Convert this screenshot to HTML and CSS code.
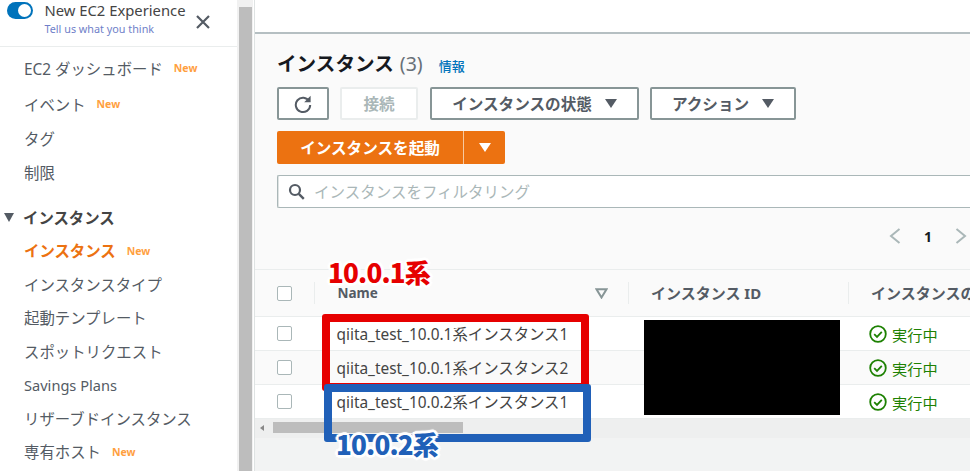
FILE: index.html
```html
<!DOCTYPE html>
<html lang="ja">
<head>
<meta charset="utf-8">
<title>インスタンス | EC2</title>
<link rel="stylesheet" href="styles.css">
</head>
<body>
<div class="app">
  <aside class="sidebar">
    <div class="exp">
      <span class="toggle"><span class="knob"></span></span>
      <div class="exp-text">
        <div class="exp-title">New EC2 Experience</div>
        <div class="exp-link">Tell us what you think</div>
      </div>
      <svg class="exp-close" width="16" height="16" viewBox="0 0 16 16"><path d="M2 2l12 12M14 2L2 14" stroke="#545b64" stroke-width="2.2" fill="none"/></svg>
    </div>
    <nav class="nav">
      <a class="nav-item first">EC2 ダッシュボード<span class="new">New</span></a>
      <a class="nav-item second">イベント<span class="new">New</span></a>
      <a class="nav-item wide">タグ</a>
      <a class="nav-item wide">制限</a>
      <div class="nav-head"><span class="caret"></span>インスタンス</div>
      <a class="nav-item active">インスタンス<span class="new">New</span></a>
      <a class="nav-item">インスタンスタイプ</a>
      <a class="nav-item">起動テンプレート</a>
      <a class="nav-item">スポットリクエスト</a>
      <a class="nav-item small">Savings Plans</a>
      <a class="nav-item">リザーブドインスタンス</a>
      <a class="nav-item">専有ホスト<span class="new">New</span></a>
    </nav>
  </aside>
  <div class="vscroll"><div class="vthumb"></div></div>
  <main class="main">
    <div class="topstrip"></div>
    <section class="panel">
      <h1 class="title">インスタンス<span class="count">(3)</span><a class="info">情報</a></h1>
      <div class="toolbar">
        <button class="btn btn-refresh"><svg width="20" height="20" viewBox="0 0 20 20"><path d="M16.2 7.2A7.2 7.2 0 1 0 17.2 11" stroke="#545b64" stroke-width="2" fill="none"/><path d="M17.6 1.8v6.4h-6.4z" fill="#545b64"/></svg></button>
        <button class="btn btn-connect">接続</button>
        <button class="btn btn-state">インスタンスの状態<span class="tri"></span></button>
        <button class="btn btn-action">アクション<span class="tri"></span></button>
      </div>
      <div class="launch">
        <button class="launch-main">インスタンスを起動</button>
        <button class="launch-more"><span class="tri white"></span></button>
      </div>
      <div class="search">
        <svg width="17" height="17" viewBox="0 0 17 17"><circle cx="7" cy="7" r="5" stroke="#545b64" stroke-width="2.2" fill="none"/><path d="M10.8 10.8l5 5" stroke="#545b64" stroke-width="2.4"/></svg>
        <span class="placeholder">インスタンスをフィルタリング</span>
      </div>
      <div class="pager">
        <svg width="12" height="18" viewBox="0 0 12 18"><path d="M10.5 2L2 9l8.5 7" stroke="#aab7b8" stroke-width="2" fill="none"/></svg>
        <span class="page">1</span>
        <svg width="12" height="18" viewBox="0 0 12 18"><path d="M1.5 2L10 9l-8.5 7" stroke="#aab7b8" stroke-width="2" fill="none"/></svg>
      </div>
    </section>
    <section class="table">
      <div class="row head">
        <div class="c-check"><span class="box"></span></div>
        <div class="c-name"><span class="h-name">Name</span><svg class="sort" width="13" height="11" viewBox="0 0 13 11"><path d="M1.5 1.2h10L6.5 9.5z" stroke="#879596" stroke-width="2" fill="none"/></svg></div>
        <div class="c-id">インスタンス ID</div>
        <div class="c-state">インスタンスの状態</div>
      </div>
      <div class="row">
        <div class="c-check"><span class="box"></span></div>
        <div class="c-name">qiita_test_10.0.1系インスタンス1</div>
        <div class="c-id"></div>
        <div class="c-state"><svg class="ok" width="18" height="18" viewBox="0 0 18 18"><circle cx="9" cy="9" r="7.8" stroke="#1d8102" stroke-width="1.8" fill="none"/><path d="M5.2 9.2l2.8 2.7 4.8-5" stroke="#1d8102" stroke-width="1.8" fill="none"/></svg>実行中</div>
      </div>
      <div class="row alt">
        <div class="c-check"><span class="box"></span></div>
        <div class="c-name">qiita_test_10.0.1系インスタンス2</div>
        <div class="c-id"></div>
        <div class="c-state"><svg class="ok" width="18" height="18" viewBox="0 0 18 18"><circle cx="9" cy="9" r="7.8" stroke="#1d8102" stroke-width="1.8" fill="none"/><path d="M5.2 9.2l2.8 2.7 4.8-5" stroke="#1d8102" stroke-width="1.8" fill="none"/></svg>実行中</div>
      </div>
      <div class="row">
        <div class="c-check"><span class="box"></span></div>
        <div class="c-name">qiita_test_10.0.2系インスタンス1</div>
        <div class="c-id"></div>
        <div class="c-state"><svg class="ok" width="18" height="18" viewBox="0 0 18 18"><circle cx="9" cy="9" r="7.8" stroke="#1d8102" stroke-width="1.8" fill="none"/><path d="M5.2 9.2l2.8 2.7 4.8-5" stroke="#1d8102" stroke-width="1.8" fill="none"/></svg>実行中</div>
      </div>
      <div class="hscroll"><span class="harrow"></span><div class="hthumb"></div></div>
    </section>
  </main>
</div>
<div class="redact"></div>
<div class="mark mark-red"></div>
<div class="mark mark-blue"></div>
<div class="label label-red">10.0.1系</div>
<div class="label label-blue">10.0.2系</div>
</body>
</html>
```
FILE: styles.css
```css
* { box-sizing: border-box; }
html, body { margin: 0; height: 471px; overflow: hidden; background: #fff; }
body { font-family: "Noto Sans", "Noto Sans CJK JP", sans-serif; color: #444; position: relative; }
.app { display: flex; width: 970px; height: 471px; overflow: hidden; }

.sidebar { width: 237px; flex: none; background: #fff; }
.exp { height: 47px; border-bottom: 1px solid #eaeded; display: flex; align-items: flex-start; position: relative; padding-left: 7px; }
.toggle { width: 26px; height: 17px; margin-top: 2px; border-radius: 9px; background: #0073bb; display: block; position: relative; flex: none; }
.knob { position: absolute; right: 2px; top: 2px; width: 13px; height: 13px; border-radius: 50%; background: #fff; }
.exp-text { margin-left: 11.5px; padding-top: 0; }
.exp-title { font-size: 14.8px; line-height: 20px; color: #444; white-space: nowrap; }
.exp-link { font-size: 10.8px; line-height: 16px; margin-top: 1px; color: #6f7fc9; white-space: nowrap; }
.exp-close { position: absolute; left: 195px; top: 14px; }

.nav { display: flex; flex-direction: column; }
.nav-item { height: 33.5px; padding-left: 24px; font-size: 15.4px; color: #545b64; display: flex; align-items: center; white-space: nowrap; }
.nav-item.first { margin-top: 4px; height: 34px; }
.nav-item.second { margin-top: 2px; height: 34px; }
.nav-item.wide { height: 34px; }
.nav-item.small { font-size: 14.6px; }
.nav-item.active { color: #ec7211; font-weight: 700; }
.new { font-size: 10.5px; font-weight: 700; color: #ff9f3f; margin-left: 11px; }
.nav-head { height: 34px; margin-top: 11px; padding-left: 4px; font-size: 15.4px; font-weight: 700; color: #444; display: flex; align-items: center; }
.caret { width: 0; height: 0; border-left: 5.5px solid transparent; border-right: 5.5px solid transparent; border-top: 9px solid #545b64; margin-right: 9px; }

.vscroll { width: 16px; flex: none; background: #f1f1f1; padding: 7px 1px 0 2px; }
.vthumb { height: 100%; background: #bdbdbd; }

.main { flex: 1; min-width: 0; margin-left: 2px; background: #f2f3f3; box-shadow: -1px 0 0 #dfe3e3; overflow: hidden; }
.topstrip { background: #fff; border-bottom: 2px solid #b5bfc2; height: 34px; }
.panel { height: 235px; background: #fafafa; padding: 15px 0 0 22px; }
.title { margin: 0; height: 30px; font-size: 19.6px; line-height: 30px; font-weight: 700; color: #16191f; white-space: nowrap; }
.count { font-size: 19.5px; font-weight: 400; color: #687078; margin-left: 6px; }
.info { font-size: 13px; font-weight: 500; color: #0073bb; margin-left: 16px; }
.toolbar { display: flex; margin-top: 8px; height: 33px; }
.btn { height: 33px; border: 2px solid #879596; border-radius: 2px; background: #fff; font: inherit; font-size: 15.6px; font-weight: 700; color: #545b64; display: flex; align-items: center; justify-content: center; padding: 0; white-space: nowrap; }
.btn-refresh { width: 52px; }
.btn-connect { width: 78px; margin-left: 11px; border-color: #eaeded; color: #aab7b8; }
.btn-state { width: 209px; margin-left: 12px; }
.btn-action { width: 146px; margin-left: 11px; }
.tri { width: 0; height: 0; border-left: 6px solid transparent; border-right: 6px solid transparent; border-top: 9px solid #545b64; margin-left: 13px; display: block; }
.tri.white { border-top-color: #fff; margin: 0; }
.launch { display: flex; margin-top: 11px; height: 33px; width: 228px; }
.launch-main { width: 187px; height: 33px; border: 0; border-right: 1px solid #f7c9a0; border-radius: 2px 0 0 2px; background: #ec7211; color: #fff; font: inherit; font-size: 15.6px; font-weight: 700; padding: 0; }
.launch-more { flex: 1; height: 33px; border: 0; border-radius: 0 2px 2px 0; background: #ec7211; display: flex; align-items: center; justify-content: center; padding: 0; }
.search { margin-top: 11px; height: 33px; border: 1px solid #aab7b8; border-width: 1px 0 1px 1px; border-radius: 2px 0 0 2px; background: #fff; display: flex; align-items: center; padding-left: 10px; box-shadow: inset 1px 0 0 #dfe3e3; }
.placeholder { margin-left: 9px; font-size: 15.5px; color: #aab7b8; white-space: nowrap; }
.pager { display: flex; align-items: center; height: 28px; margin-top: 14px; padding-left: 612px; }
.page { width: 54px; text-align: center; font-size: 14px; font-weight: 700; color: #16191f; }

.table { background: #fff; }
.row { display: flex; align-items: center; height: 34px; border-bottom: 1px solid #eaeded; background: #fff; font-size: 15.4px; color: #444; white-space: nowrap; }
.row.alt { background: #fafafa; }
.row.head { height: 48px; background: #fafafa; border-top: 1px solid #eaeded; border-bottom-color: #eaeded; font-weight: 700; color: #545b64; }
.c-check { width: 59px; flex: none; padding-left: 22px; display: flex; align-items: center; }
.box { display: block; width: 15px; height: 15px; border: 1px solid #aab7b8; border-radius: 2px; background: #fff; }
.c-name { width: 314px; flex: none; padding-left: 22.5px; display: flex; align-items: center; position: relative; }
.c-id { width: 220px; flex: none; padding-left: 22px; }
.c-state { flex: 1; padding-left: 21px; display: flex; align-items: center; font-size: 15.2px; color: #1d8102; }
.head .c-name, .head .c-id, .head .c-state { height: 22px; border-left: 1px solid #eaeded; }
.head .c-id, .head .c-state { font-size: 15px; color: #545b64; line-height: 22px; }
.head .c-state { padding-left: 22px; }
.h-name { font-size: 13.5px; }
.sort { position: absolute; left: 280px; top: 6px; }
.ok { margin-right: 5px; flex: none; }
.hscroll { height: 19px; background: #eeefef; position: relative; }
.harrow { position: absolute; left: 5px; top: 6px; width: 0; height: 0; border-top: 3.5px solid transparent; border-bottom: 3.5px solid transparent; border-right: 4px solid #888; }
.hthumb { position: absolute; left: 18px; top: 3px; width: 190px; height: 11px; background: #bdbdbd; }

.redact { position: absolute; left: 644px; top: 320px; width: 196px; height: 95px; background: #000; }
.mark { position: absolute; border-radius: 3px; }
.mark-red { left: 322px; top: 314px; width: 267px; height: 77px; border: 8px solid #e60000; }
.mark-blue { left: 324px; top: 384px; width: 267px; height: 58px; border: 8.5px solid #2060b8; }
.label { position: absolute; font-family: "Noto Sans CJK JP", sans-serif; font-size: 26px; font-weight: 900; line-height: 30px; letter-spacing: -0.8px; white-space: nowrap;
  text-shadow: 2px 0 0 #fff, -2px 0 0 #fff, 0 2px 0 #fff, 0 -2px 0 #fff, 2px 2px 0 #fff, -2px 2px 0 #fff, 2px -2px 0 #fff, -2px -2px 0 #fff, 3px 0 1px #fff, -3px 0 1px #fff, 0 3px 1px #fff, 0 -3px 1px #fff; }
.label-red { left: 328px; top: 257px; color: #e60000; }
.label-blue { left: 336px; top: 429px; color: #2060b8; }
```
